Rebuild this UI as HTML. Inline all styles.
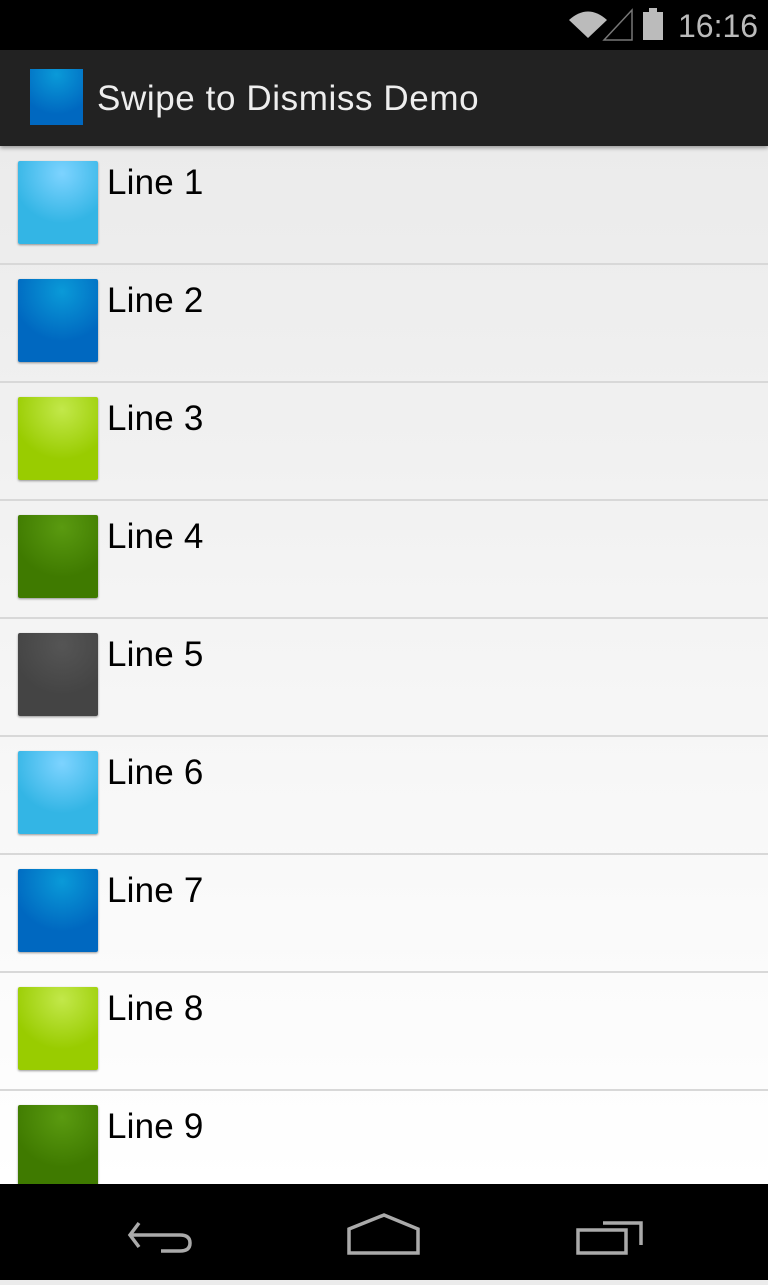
<!DOCTYPE html>
<html><head><style>
body{margin:0;width:768px;height:1280px;overflow:hidden;position:relative;font-family:"Liberation Sans",sans-serif;background:linear-gradient(#ebebeb 146px,#fff 1184px)}
.sb{position:absolute;top:0;left:0;width:768px;height:50px;background:#000}
.ab{position:absolute;top:50px;left:0;width:768px;height:96px;background:#222;box-shadow:0 2px 4px rgba(0,0,0,.35)}
.row{position:absolute;left:0;width:768px;height:117px;border-bottom:2px solid #d8d8d8}
.ic{position:absolute;left:18px;top:15px;width:80px;height:83px;border-radius:2px;box-shadow:0 1px 2px rgba(0,0,0,.4)}
.t{position:absolute;left:107px;top:17px;font-size:35px;color:#000;letter-spacing:0.2px}
.nav{position:absolute;top:1184px;left:0;width:768px;height:96px;background:#000}
</style></head><body>
<div class="sb">
<svg width="768" height="50" style="position:absolute;left:0;top:0">
<path d="M569 20 Q588 3 607 20 L588 38 Z" fill="#bbb"/>
<path d="M604 40 L632 10 L632 40 Z" fill="none" stroke="#777" stroke-width="1.5"/>
<rect x="643" y="12" width="20" height="28" fill="#bbb"/><rect x="649" y="8" width="8" height="5" fill="#bbb"/>
<text x="678" y="37" font-size="32" fill="#bbb" font-family="Liberation Sans">16:16</text>
</svg></div>
<div class="ab">
<div style="position:absolute;left:30px;top:19px;width:53px;height:56px;background:radial-gradient(circle at 50% 10%,#0a9ad8,#0068c0 70%)"></div>
<div style="position:absolute;left:97px;top:29px;font-size:35px;color:#eee;letter-spacing:0.6px">Swipe to Dismiss Demo</div>
</div>
<div class="row" style="top:146px"><div class="ic" style="background:radial-gradient(circle at 55% 15%,#7dd3ff,#33b5e5 60%)"></div><div class="t">Line 1</div></div>
<div class="row" style="top:264px"><div class="ic" style="background:radial-gradient(circle at 55% 15%,#0a9ad8,#0068c0 60%)"></div><div class="t">Line 2</div></div>
<div class="row" style="top:382px"><div class="ic" style="background:radial-gradient(circle at 55% 15%,#c2e84a,#99cc00 60%)"></div><div class="t">Line 3</div></div>
<div class="row" style="top:500px"><div class="ic" style="background:radial-gradient(circle at 55% 15%,#5a9a10,#3f7a00 60%)"></div><div class="t">Line 4</div></div>
<div class="row" style="top:618px"><div class="ic" style="background:radial-gradient(circle at 55% 15%,#555,#444 60%)"></div><div class="t">Line 5</div></div>
<div class="row" style="top:736px"><div class="ic" style="background:radial-gradient(circle at 55% 15%,#7dd3ff,#33b5e5 60%)"></div><div class="t">Line 6</div></div>
<div class="row" style="top:854px"><div class="ic" style="background:radial-gradient(circle at 55% 15%,#0a9ad8,#0068c0 60%)"></div><div class="t">Line 7</div></div>
<div class="row" style="top:972px"><div class="ic" style="background:radial-gradient(circle at 55% 15%,#c2e84a,#99cc00 60%)"></div><div class="t">Line 8</div></div>
<div class="row" style="top:1090px;border:none"><div class="ic" style="background:radial-gradient(circle at 55% 15%,#5a9a10,#3f7a00 60%)"></div><div class="t">Line 9</div></div>
<div class="nav">
<svg width="768" height="96">
<g fill="none" stroke="#aaa" stroke-width="3.5">
<path d="M139 39 L130 51 L139 63 M130 51 H180 Q190 51 190 59 Q190 67 180 67 H161"/>
<path d="M349 45 L384 31 L418 45 V69 H349 Z"/>
<path d="M578 46 H626 V69 H578 Z M603 39 H641 V61"/>
</g></svg></div>
</body></html>
